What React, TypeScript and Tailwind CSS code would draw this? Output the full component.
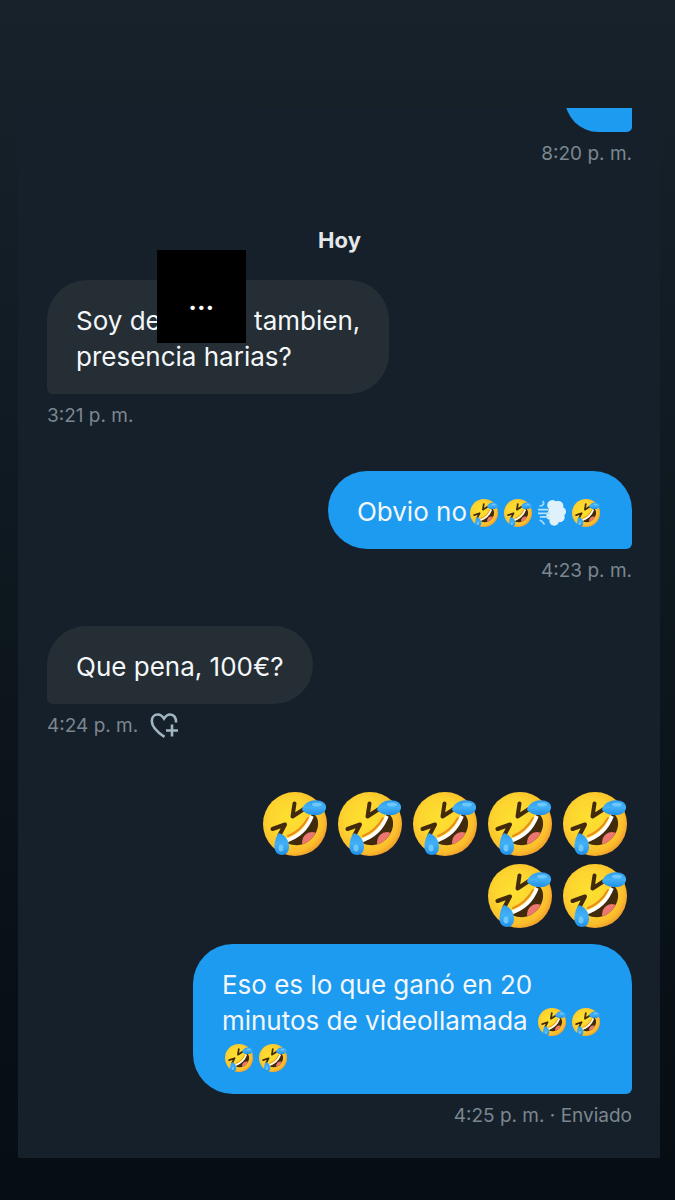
import React from 'react'
import type { ReactNode } from 'react'

function LaughEmoji({ className }: { className: string }) {
    return (
        <svg viewBox="0 0 64 64" className={className} role="img" aria-label="🤣">
            <defs>
                <radialGradient id="face" cx="0.42" cy="0.42" r="0.62">
                    <stop offset="0" stopColor="#fde02f" />
                    <stop offset="0.5" stopColor="#fdd52f" />
                    <stop offset="0.85" stopColor="#fbbd2c" />
                    <stop offset="1" stopColor="#f09a2b" />
                </radialGradient>
                <linearGradient id="tear" x1="0" y1="0" x2="0" y2="1">
                    <stop offset="0" stopColor="#2f9df0" />
                    <stop offset="0.5" stopColor="#42b0f5" />
                    <stop offset="1" stopColor="#1f8fe8" />
                </linearGradient>
                <clipPath id="mouth">
                    <path d="M49 21C57 24 57 37 50 45C44 52 35 56 24 51C36 45 45 36 49 21Z" />
                </clipPath>
            </defs>
            <circle cx="32" cy="32" r="32" fill="url(#face)" />
            {/* ojos */}
            <path d="M31.5 11.5L29.500 24.500L41 17" fill="none" stroke="#422b0d" strokeWidth="4" strokeLinecap="round" strokeLinejoin="round" />
            <path d="M9.500 37L22 32.500L16.500 43" fill="none" stroke="#422b0d" strokeWidth="4" strokeLinecap="round" strokeLinejoin="round" />
            {/* boca */}
            <path d="M25 44C33 41 40 35 45 26" fill="none" stroke="#e88b1c" strokeWidth="2" strokeLinecap="round" />
            <path d="M49 21C57 24 57 37 50 45C44 52 35 56 24 51C36 45 45 36 49 21Z" fill="#422b0d" />
            <circle cx="49" cy="50" r="10" fill="#ed7770" clipPath="url(#mouth)" />
            <path d="M23 48.500C35 45 44 37 49 24" fill="none" stroke="#fff" strokeWidth="3.600" />
            {/* lagrimas */}
            <path d="M39 18C40 12 46 8.500 52 8.200C59 8 63.500 11 63 16C62.500 21 57 23.800 50 23C45 22.500 42 21 39 18Z" fill="url(#tear)" />
            <path d="M16 41C22 43 26 48 26 55C26 60 23 63 19 63C14 63 11 59 11.500 53C12 48 13 44 16 41Z" fill="url(#tear)" />
            <ellipse cx="54" cy="12.500" rx="5" ry="2" fill="#6cc8fa" />
            <ellipse cx="18" cy="56" rx="2.500" ry="3.500" fill="#6cc8fa" />
        </svg>
    )
}

function Laugh() {
    return <LaughEmoji className="mx-[3px] inline-block size-7 align-[-6px]" />
}

function WindEmoji() {
    return (
        <svg viewBox="0 0 64 64" className="mx-[3px] inline-block size-7 align-[-6px]" role="img" aria-label="💨">
            <g fill="#dff1fb">
                <circle cx="33" cy="14" r="12" />
                <circle cx="46" cy="16" r="12" />
                <circle cx="53" cy="29" r="11" />
                <circle cx="50" cy="42" r="11" />
                <circle cx="37" cy="50" r="11" />
                <circle cx="28" cy="38" r="9" />
                <circle cx="38" cy="30" r="15" />
            </g>
            <path d="M1 24H22M0 33H26M6 41H24" stroke="#b9e4f8" strokeWidth="4" strokeLinecap="round" />
            <path d="M5 16C12 15 14 11 12 6M5 49C9 50 12 54 14 57" fill="none" stroke="#9fd9f8" strokeWidth="4" strokeLinecap="round" />
        </svg>
    )
}

function HeartPlus() {
    return (
        <svg viewBox="0 0 28 28" className="size-7" fill="none" stroke="#a3b4c2" strokeWidth="2.600">
            <path d="M14.500 24.800C7 20 1.800 14.500 1.800 9C1.800 5.200 4.300 2.500 7.800 2.500C10.500 2.500 12.500 4.200 14 6.600C15.500 4.200 17.500 2.500 20.200 2.500C23.800 2.500 26.200 5.500 26 10.500" />
            <path d="M22 12.500V24.500M16 18.500H28" />
        </svg>
    )
}

function Message({ children, time, mine }: { children: ReactNode; time: ReactNode; mine?: boolean }) {
    return (
        <div className={mine ? 'flex flex-col items-end' : 'flex flex-col items-start'}>
            <div
                className={
                    mine
                        ? 'max-w-[442px] rounded-[40px] rounded-br-md bg-[#1d9bf0] px-[29px] pt-[23px] pb-[19px]'
                        : 'max-w-[442px] rounded-[40px] rounded-bl-md bg-[#242e34] px-[29px] pt-[23px] pb-[19px]'
                }
            >
                <p>{children}</p>
            </div>
            <div className="mt-2 flex h-7 items-center gap-3 text-[19px] text-[#7b8790]">{time}</div>
        </div>
    )
}

export default function App() {
    return (
        <main className="min-h-screen bg-linear-to-b from-[#17222a] to-[#060d13] pt-27 pr-[15px] pb-10 pl-[18px] font-['Inter',sans-serif] text-[26px] leading-9 text-[#f4f7f9]">
            <section className="bg-[#16202a] pr-7 pb-7 pl-[29px]">
                {/* mensaje anterior, cortado por arriba */}
                <div className="flex h-6 items-end justify-end overflow-hidden">
                    <div className="h-20 w-[67px] shrink-0 rounded-[40px] rounded-br-md bg-[#1d9bf0]" />
                </div>
                <p className="mt-2 text-right text-[19px] leading-7 text-[#7b8790]">8:20 p. m.</p>

                <h2 className="mt-[54px] mb-[22px] text-center text-[22px] leading-9 font-bold text-[#e3e7ea]">Hoy</h2>

                <div className="flex flex-col gap-[41px]">
                    <Message time="3:21 p. m.">
                        Soy de
                        <span className="relative inline-block w-[86px]">
                            <span className="absolute -top-20 -left-1 flex h-[93px] w-[89px] items-center justify-center bg-black pt-2 text-[26px] font-bold text-white">
                                ...
                            </span>
                        </span>{' '}
                        tambien,
                        <br />
                        presencia harias?
                    </Message>

                    <Message mine time="4:23 p. m.">
                        Obvio no<Laugh /><Laugh /><WindEmoji /><Laugh />
                    </Message>

                    <Message
                        time={
                            <>
                                4:24 p. m.
                                <button type="button" aria-label="Reaccionar">
                                    <HeartPlus />
                                </button>
                            </>
                        }
                    >
                        Que pena, 100€?
                    </Message>
                </div>

                <div className="mt-[52px] mb-4 ml-auto flex max-w-[376px] flex-wrap justify-end gap-x-[11px] gap-y-2 pr-[5px]">
                    {[1, 2, 3, 4, 5, 6, 7].map((n) => (
                        <LaughEmoji key={n} className="size-16" />
                    ))}
                </div>

                <Message mine time="4:25 p. m. · Enviado">
                    Eso es lo que ganó en 20<br />
                    minutos de videollamada <Laugh /><Laugh /><br />
                    <Laugh /><Laugh />
                </Message>
            </section>
        </main>
    )
}
